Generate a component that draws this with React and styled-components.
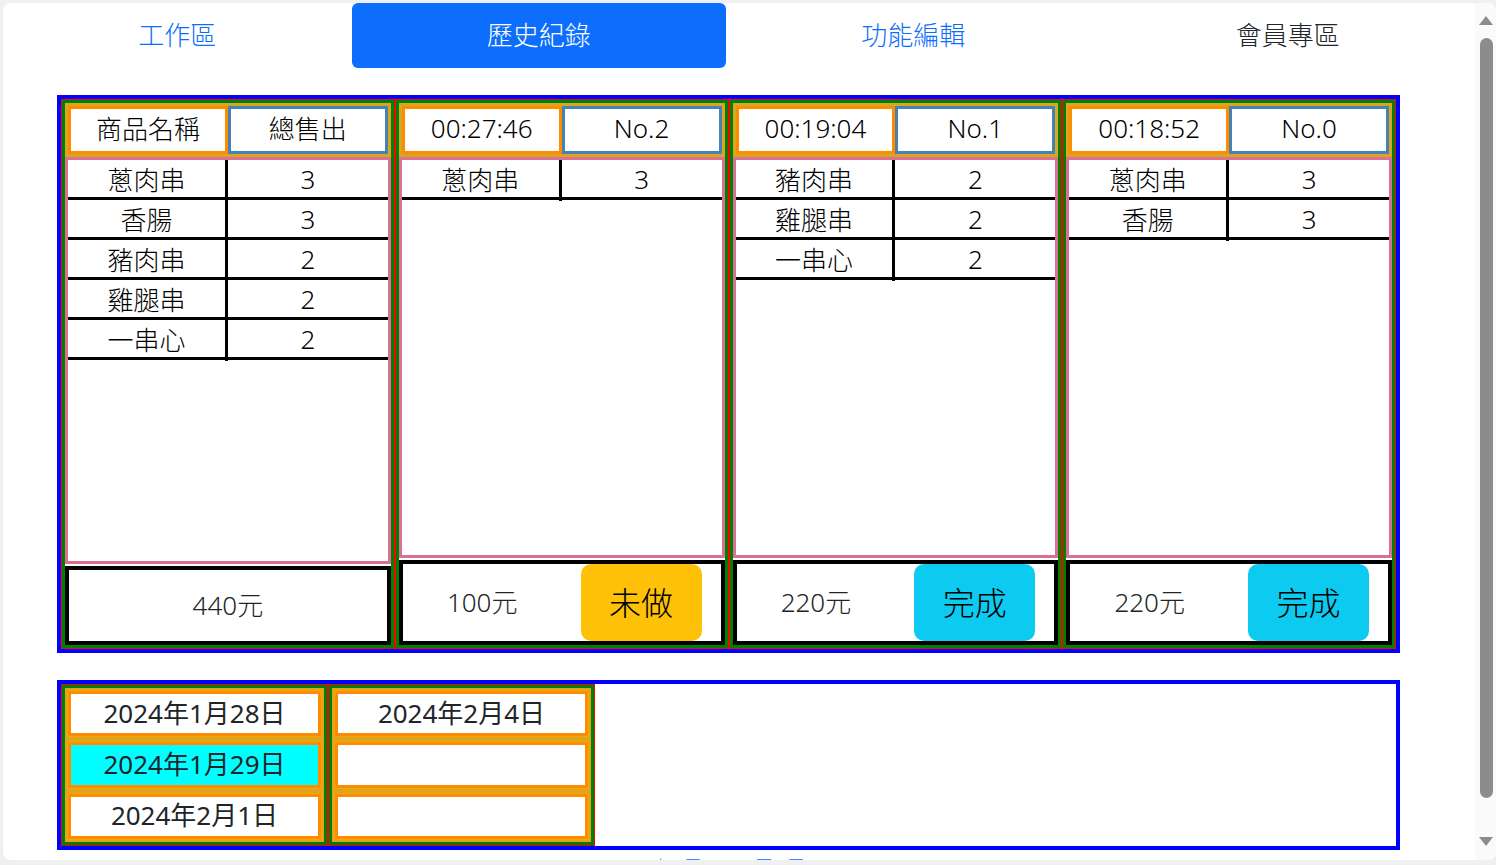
import styled, { createGlobalStyle } from "styled-components"

const GlobalStyle = createGlobalStyle`
  *, *::before, *::after {
    box-sizing: border-box;
  }

  html, body {
    margin: 0;
    height: 100%;
    overflow: hidden;
    background-color: #f0f0f0;
    font-family: "Noto Sans", "Noto Sans CJK TC", sans-serif;
    font-weight: 300;
    color: #212529;
  }
`

const Frame = styled.div`
  margin: 3px 0 0 3px;
  height: 857px;
  display: flex;
  background-color: white;
  border-radius: 8px;
  overflow: hidden;
`

const Page = styled.div`
  flex: 1;
  min-width: 0;
  overflow: hidden;
`

const ScrollRail = styled.div`
  width: 21px;
  display: grid;
  grid-template-rows: 32px 1fr 32px;
  background-color: #fafafa;
`

const ScrollArrow = styled.div`
  display: flex;
  justify-content: center;
  padding-left: 1px;
  align-items: ${props => props.$down ? 'flex-start' : 'flex-end'};
  padding-top: ${props => props.$down ? '9px' : '0'};
  padding-bottom: ${props => props.$down ? '0' : '10px'};
`

const ScrollThumb = styled.div`
  width: 13px;
  height: 760px;
  margin: 3px 0 0 5px;
  border-radius: 7px;
  background-color: #8c8c8c;
`

const Nav = styled.nav`
  display: flex;
  height: 65px;
`

const Tab = styled.div`
  flex: 1 1 auto;
  display: flex;
  align-items: center;
  justify-content: center;
  padding: 0 16px 4px;
  font-size: 26px;
  border-radius: 6px;
  color: ${props => props.$active ? 'white' : props.$muted ? '#212529' : '#0d6efd'};
  background-color: ${props => props.$active ? '#0d6efd' : 'transparent'};
`

const Content = styled.main`
  padding: 27px 0 20px 54px;
`

const OrderPanel = styled.section`
  width: 1343px;
  height: 558px;
  margin-bottom: 27px;
  border: 4px solid blue;
  display: grid;
  grid-template-columns: repeat(4, 1fr);
`

const OrderColumn = styled.div`
  min-width: 0;
  display: flex;
  border: 1px solid red;
`

const OrderBody = styled.div`
  flex: 1;
  display: flex;
  flex-direction: column;
  border: 3px solid green;
`

const OrderHeader = styled.div`
  display: grid;
  grid-template-columns: 1fr 1fr;
  padding: 3px;
  background-color: goldenrod;
`

const HeadCell = styled.div`
  height: 48px;
  display: flex;
  align-items: center;
  justify-content: center;
  padding-bottom: 4px;
  border: 3px solid ${props => props.$tone};
  background-color: white;
  font-size: 26px;
  color: #000;
`

const ItemList = styled.div`
  flex: 1;
  border: 3px solid palevioletred;
  background-color: white;
`

const ItemRow = styled.div`
  display: grid;
  grid-template-columns: 1fr 1fr;
  height: 40px;
  border-bottom: 3px solid #000;
`

const ItemCell = styled.div`
  display: flex;
  align-items: center;
  justify-content: center;
  padding-bottom: 3px;
  font-size: 26px;
  color: #000;

  &:first-child {
    border-right: 3px solid #000;
  }
`

const OrderFooter = styled.div`
  margin-top: 2px;
  min-height: 79px;
  display: grid;
  grid-template-columns: ${props => props.$split ? '1fr 1fr' : '1fr'};
  border: 4px solid #000;
  background-color: white;
`

const Total = styled.div`
  display: flex;
  align-items: center;
  justify-content: center;
  padding-bottom: 4px;
  font-size: 26px;
`

const StatusButton = styled.button`
  height: 77px;
  margin: 0 19px;
  padding: 0 0 4px;
  border: none;
  border-radius: 10px;
  font-family: inherit;
  font-weight: 300;
  font-size: 32px;
  color: #000;
  background-color: ${props => props.$tone};
`

const DatePanel = styled.section`
  width: 1343px;
  height: 170px;
  margin-bottom: 4px;
  border: 4px solid blue;
  display: flex;
`

const DateColumn = styled.div`
  width: 267px;
  display: flex;
  border: 1px solid red;
`

const DateBody = styled.div`
  flex: 1;
  display: flex;
  flex-direction: column;
  gap: 6px;
  padding: 3px;
  border: 3px solid green;
  background-color: goldenrod;
`

const DateCell = styled.div`
  flex: 1 1 0;
  min-height: 0;
  display: flex;
  align-items: center;
  justify-content: center;
  padding-bottom: 2px;
  border: 3px solid darkorange;
  box-shadow: 0 0 0 1px orange;
  background-color: ${props => props.$selected ? 'aqua' : 'white'};
  font-size: 26px;
  font-weight: 400;
  line-height: 1;
`

const Note = styled.div`
  width: 1343px;
  text-align: center;
  font-size: 16px;
  line-height: 24px;
  color: #0d6efd;
`

function Triangle({ down }) {
  return (
    <svg width="14" height="9" viewBox="0 0 14 9">
      <polygon points={down ? '0,0 14,0 7,9' : '7,0 14,9 0,9'} fill="#8c8c8c" />
    </svg>
  )
}

const tabs = [
  { label: '工作區' },
  { label: '歷史紀錄', active: true },
  { label: '功能編輯' },
  { label: '會員專區', muted: true },
]

const orders = [
  {
    head: ['商品名稱', '總售出'],
    items: [['蔥肉串', 3], ['香腸', 3], ['豬肉串', 2], ['雞腿串', 2], ['一串心', 2]],
    total: 440,
  },
  {
    head: ['00:27:46', 'No.2'],
    items: [['蔥肉串', 3]],
    total: 100,
    status: '未做',
  },
  {
    head: ['00:19:04', 'No.1'],
    items: [['豬肉串', 2], ['雞腿串', 2], ['一串心', 2]],
    total: 220,
    status: '完成',
  },
  {
    head: ['00:18:52', 'No.0'],
    items: [['蔥肉串', 3], ['香腸', 3]],
    total: 220,
    status: '完成',
  },
]

const dateColumns = [
  ['2024年1月28日', '2024年1月29日', '2024年2月1日'],
  ['2024年2月4日', '', ''],
]

const selectedDate = '2024年1月29日'

export default function App() {
  return (
    <>
      <GlobalStyle />
      <Frame>
        <Page>
          <Nav>
            {tabs.map(tab => (
              <Tab key={tab.label} $active={tab.active} $muted={tab.muted}>{tab.label}</Tab>
            ))}
          </Nav>

          <Content>
            <OrderPanel>
              {orders.map(order => (
                <OrderColumn key={order.head[1]}>
                  <OrderBody>
                    <OrderHeader>
                      <HeadCell $tone="darkorange">{order.head[0]}</HeadCell>
                      <HeadCell $tone="steelblue">{order.head[1]}</HeadCell>
                    </OrderHeader>

                    <ItemList>
                      {order.items.map(([name, count]) => (
                        <ItemRow key={name}>
                          <ItemCell>{name}</ItemCell>
                          <ItemCell>{count}</ItemCell>
                        </ItemRow>
                      ))}
                    </ItemList>

                    <OrderFooter $split={!!order.status}>
                      <Total>{order.total}元</Total>
                      {order.status && (
                        <StatusButton $tone={order.status === '完成' ? '#0dcaf0' : '#ffc107'}>
                          {order.status}
                        </StatusButton>
                      )}
                    </OrderFooter>
                  </OrderBody>
                </OrderColumn>
              ))}
            </OrderPanel>

            <DatePanel>
              {dateColumns.map((dates, i) => (
                <DateColumn key={i}>
                  <DateBody>
                    {dates.map((date, j) => (
                      <DateCell key={j} $selected={date === selectedDate}>{date}</DateCell>
                    ))}
                  </DateBody>
                </DateColumn>
              ))}
            </DatePanel>

            <Note>上一頁 · 1 · 2 · 下一頁</Note>
          </Content>
        </Page>

        <ScrollRail>
          <ScrollArrow><Triangle /></ScrollArrow>
          <div><ScrollThumb /></div>
          <ScrollArrow $down><Triangle down /></ScrollArrow>
        </ScrollRail>
      </Frame>
    </>
  )
}
